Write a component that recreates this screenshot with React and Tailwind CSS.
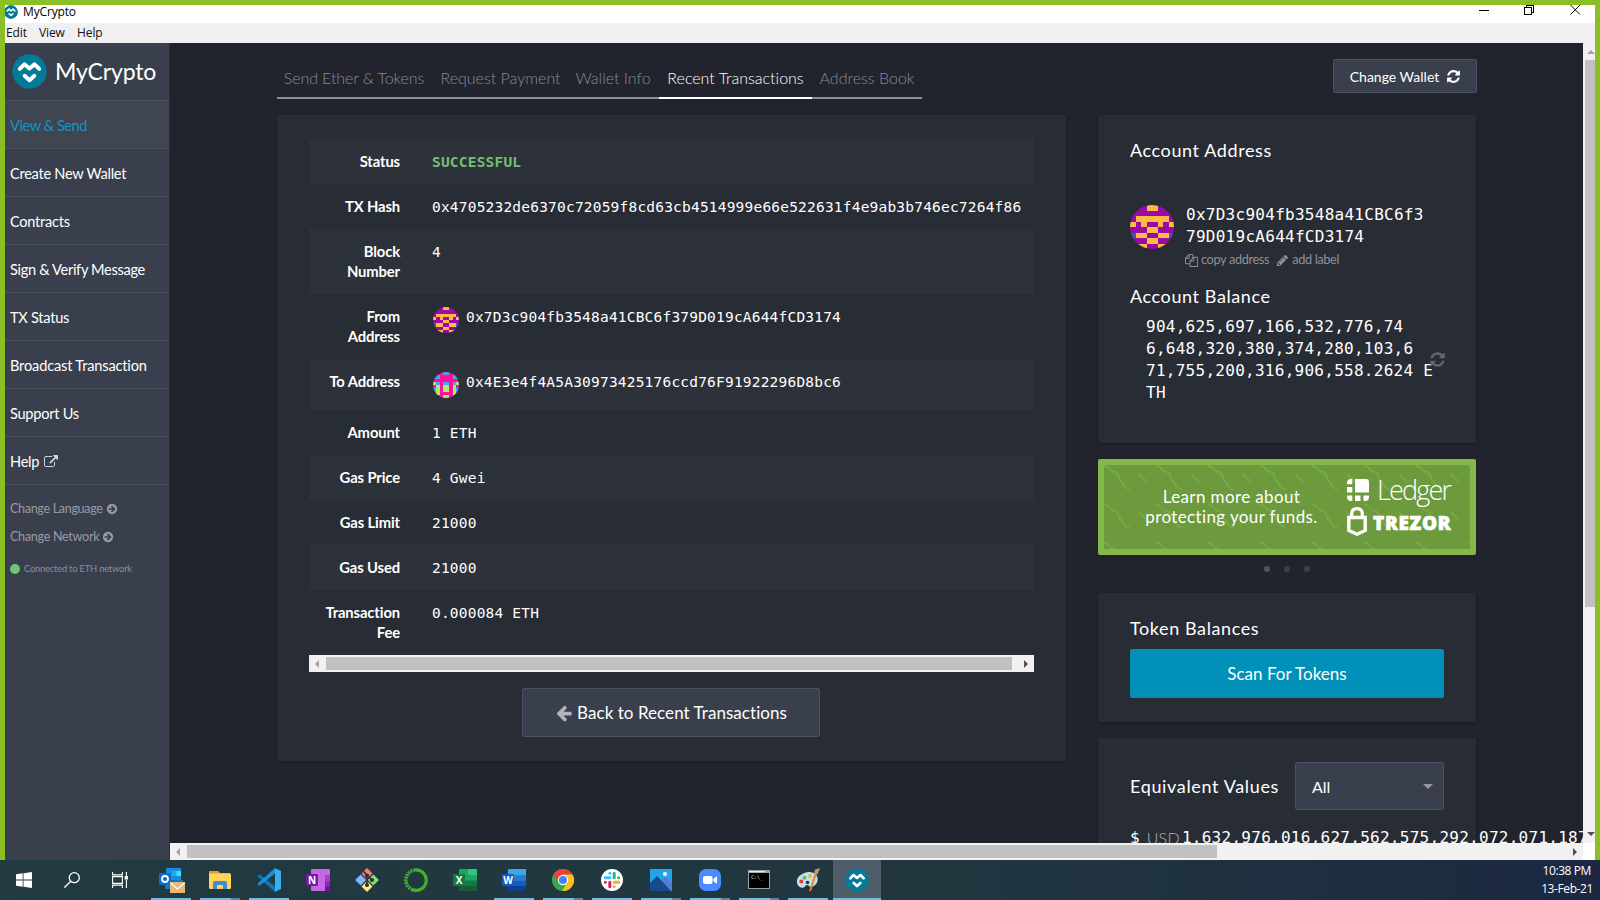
import React from "react";

const FA = {
  refresh:
    "M1639 1056q0 5-1 7-64 268-268 434.5t-478 166.5q-146 0-282.5-55t-243.5-157l-129 129q-19 19-45 19t-45-19-19-45v-448q0-26 19-45t45-19h448q26 0 45 19t19 45-19 45l-137 137q71 66 161 102t187 36q134 0 250-65t186-179q11-17 53-117 8-23 30-23h192q13 0 22.5 9.5t9.5 22.5zm25-800v448q0 26-19 45t-45 19h-448q-26 0-45-19t-19-45 19-45l138-138q-148-137-349-137-134 0-250 65t-186 179q-11 17-53 117-8 23-30 23h-199q-13 0-22.5-9.5t-9.5-22.5v-7q65-268 270-434.5t480-166.5q146 0 284 55.5t245 156.5l130-129q19-19 45-19t45 19 19 45z",
  external:
    "M1408 928v320q0 119-84.5 203.5t-203.5 84.5h-832q-119 0-203.5-84.5t-84.5-203.5v-832q0-119 84.5-203.5t203.5-84.5h704q14 0 23 9t9 23v64q0 14-9 23t-23 9h-704q-66 0-113 47t-47 113v832q0 66 47 113t113 47h832q66 0 113-47t47-113v-320q0-14 9-23t23-9h64q14 0 23 9t9 23zm384-864v512q0 26-19 45t-45 19-45-19l-176-176-652 652q-10 10-23 10t-23-10l-114-114q-10-10-10-23t10-23l652-652-176-176q-19-19-19-45t19-45 45-19h512q26 0 45 19t19 45z",
  left: "M1664 896v128q0 53-32.5 90.5t-84.5 37.5h-704l293 294q38 36 38 90t-38 90l-75 76q-37 37-90 37-52 0-91-37l-651-652q-37-37-37-90 0-52 37-91l651-650q38-38 91-38 52 0 90 38l75 74q38 38 38 91t-38 91l-293 293h704q52 0 84.5 37.5t32.5 90.5z",
  circleRight:
    "M1413 896q0-27-18-45l-91-91-362-362q-18-18-45-18t-45 18l-91 91q-18 18-18 45t18 45l189 189h-502q-26 0-45 19t-19 45v128q0 26 19 45t45 19h502l-189 189q-18 18-18 45t18 45l91 91q18 18 45 18t45-18l362-362 91-91q18-18 18-45zm251 0q0 209-103 385.5t-279.5 279.5-385.5 103-385.5-103-279.5-279.5-103-385.5 103-385.5 279.5-279.5 385.5-103 385.5 103 279.5 279.5 103 385.5z",
  pencil:
    "M491 1536l91-91-235-235-91 91v107h128v128h107zm523-928q0-22-22-22-10 0-17 7l-542 542q-7 7-7 17 0 22 22 22 10 0 17-7l542-542q7-7 7-17zm-54-192l416 416-832 832h-416v-416zm683 96q0 53-37 90l-166 166-416-416 166-165q36-38 90-38 53 0 91 38l235 234q37 39 37 91z",
  files:
    "M1696 384q40 0 68 28t28 68v1216q0 40-28 68t-68 28h-960q-40 0-68-28t-28-68v-288h-544q-40 0-68-28t-28-68v-672q0-40 20-88t48-76l408-408q28-28 76-48t88-20h416q40 0 68 28t28 68v328q68-40 128-40h416zm-544 213l-299 299h299v-299zm-640-384l-299 299h299v-299zm196 647l316-316v-416h-384v416q0 40-28 68t-68 28h-416v640h512v-256q0-40 20-88t48-76zm956 804v-1152h-384v416q0 40-28 68t-68 28h-416v640h896z",
};

const Icon = ({ name, className }) => (
  <svg viewBox="0 0 1792 1792" fill="currentColor" className={"shrink-0 " + className}>
    <path d={FA[name]} />
  </svg>
);

const Logo = ({ className }) => (
  <svg viewBox="0 0 36 36" className={"shrink-0 " + className}>
    <circle cx="18" cy="18" r="17.7" fill="#047a99" />
    <g fill="none" stroke="#fff" strokeWidth="4" strokeLinecap="round" strokeLinejoin="round">
      <path d="M8 15.4 L12.8 10.6 L18 15 L23.2 10.6 L28 15.4" />
      <path d="M13 22.4 L18 27 L23 22.4" />
    </g>
  </svg>
);

const COLORS = { P: "#9c0aa6", O: "#fdbb45", B: "#2f5fc0", K: "#ff109c", G: "#a9ef6b", L: "#559ff2" };
const FROM = ["PPPOOPPP", "PPPPPPPP", "POOOOOOP", "OPOPPOPO", "PPPOOPPP", "BOOPPOOB", "PPPOOPPP", "POOPPOOP"];
const TO = ["LKKLLKKL", "LLKKKKLL", "KKKKKKKK", "GLKLLKLG", "KGKGGKGK", "LGKGGKGL", "LGKKKKGL", "GKKGGKKG"];

const Avatar = ({ rows, className }) => (
  <svg viewBox="0 0 8 8" shapeRendering="crispEdges" className={"shrink-0 rounded-full " + className}>
    {rows.map((r, y) =>
      [...r].map((c, x) => <rect key={x + "-" + y} x={x} y={y} width="1" height="1" fill={COLORS[c]} />)
    )}
  </svg>
);

const MONO = "font-['DejaVu_Sans_Mono','Liberation_Mono',monospace]";

const NavItem = ({ children, active }) => (
  <div
    className={
      "flex h-12 items-center border-b border-[#4b5060] pt-[2px] pl-[5px] text-[14.6px] tracking-[-0.27px] " +
      (active ? "bg-[#404552] text-[#0e97c0]" : "text-white")
    }
  >
    {children}
  </div>
);

function Sidebar() {
  return (
    <div className="flex w-[165px] shrink-0 flex-col border-r border-[#2b2f39] bg-[#3a3f4d]">
      <div className="flex h-[58px] items-center border-b border-[#4b5060] pl-[7px] text-[23px] text-white">
        <Logo className="h-[35px] w-[35px]" />
        <span className="ml-[8px] tracking-[-0.15px]">MyCrypto</span>
      </div>
      <NavItem active>
        <span className="tracking-[-0.45px]">View &amp; Send</span>
      </NavItem>
      <NavItem>Create New Wallet</NavItem>
      <NavItem>Contracts</NavItem>
      <NavItem>
        <span className="tracking-[-0.33px]">Sign &amp; Verify Message</span>
      </NavItem>
      <NavItem>TX Status</NavItem>
      <NavItem>
        <span className="tracking-[-0.17px]">Broadcast Transaction</span>
      </NavItem>
      <NavItem>Support Us</NavItem>
      <NavItem>
        Help <Icon name="external" className="ml-[5px] h-[14px] w-[14px] text-[#d2d3d7]" />
      </NavItem>
      <div className="mt-[10px] flex h-7 items-center pl-[5px] text-[12.6px] tracking-[-0.34px] text-[#989ba3]">
        Change Language <Icon name="circleRight" className="ml-[3px] h-3 w-3" />
      </div>
      <div className="flex h-7 items-center pl-[5px] text-[12.6px] tracking-[-0.3px] text-[#989ba3]">
        Change Network <Icon name="circleRight" className="ml-[3px] h-3 w-3" />
      </div>
      <div className="mt-[4px] flex h-7 items-center pl-[5px] text-[9.4px] tracking-[-0.22px] text-[#8b8f98]">
        <span className="mr-1 h-[10px] w-[10px] rounded-full bg-[#70c670]" />
        Connected to ETH network
      </div>
    </div>
  );
}

const Row = ({ label, children, striped, h }) => (
  <div className={"flex " + h + " " + (striped ? "bg-[#2d3139]" : "")}>
    <div className="w-[91px] pt-3 text-right text-[14.8px] leading-5 font-bold tracking-[-0.12px] text-white">{label}</div>
    <div className={"ml-8 flex pt-[13px] text-[14.5px] leading-5 tracking-[0.2px] whitespace-nowrap text-white " + MONO}>
      {children}
    </div>
  </div>
);

const Tab = ({ w, active, children }) => (
  <div
    className={
      "flex h-[40px] items-center justify-center border-b-2 text-[16px] font-light whitespace-nowrap " +
      w +
      (active ? " border-white text-white" : " border-[#8a8c9d] text-[#888a96]")
    }
  >
    {children}
  </div>
);

const Tri = ({ d, className }) => (
  <svg viewBox="0 0 8 8" className={"h-2 w-2 shrink-0 " + className} fill="currentColor">
    <path d={d} />
  </svg>
);
const T_LEFT = "M6 0V8L2 4Z";
const T_RIGHT = "M2 0V8L6 4Z";
const T_UP = "M0 6H8L4 2Z";
const T_DOWN = "M0 2H8L4 6Z";

function TxCard() {
  return (
    <div className="h-[646px] w-[789px] rounded-[2px] bg-[#282c35] px-8 pt-6 shadow-[0_1px_3px_rgba(0,0,0,0.25)]">
      <div className="w-[725px]">
        <Row label="Status" striped h="h-[45px]">
          <span className="font-bold text-[#70c070]">SUCCESSFUL</span>
        </Row>
        <Row label="TX Hash" h="h-[45px]">0x4705232de6370c72059f8cd63cb4514999e66e522631f4e9ab3b746ec7264f86</Row>
        <Row label={<>Block<br />Number</>} striped h="h-[65px]">4</Row>
        <Row label={<>From<br />Address</>} h="h-[65px]">
          <Avatar rows={FROM} className="mr-[7px] ml-[1px] h-[26px] w-[26px]" />
          0x7D3c904fb3548a41CBC6f379D019cA644fCD3174
        </Row>
        <Row label="To Address" striped h="h-[51px]">
          <Avatar rows={TO} className="mr-[7px] ml-[1px] h-[26px] w-[26px]" />
          0x4E3e4f4A5A30973425176ccd76F91922296D8bc6
        </Row>
        <Row label="Amount" h="h-[45px]">1 ETH</Row>
        <Row label="Gas Price" striped h="h-[45px]">4 Gwei</Row>
        <Row label="Gas Limit" h="h-[45px]">21000</Row>
        <Row label="Gas Used" striped h="h-[45px]">21000</Row>
        <Row label={<>Transaction<br />Fee</>} h="h-[65px]">0.000084 ETH</Row>
        <div className="flex h-[17px] items-center justify-between bg-[#f1f1f1] px-1">
          <Tri d={T_LEFT} className="text-[#a3a3a3]" />
          <div className="mr-[10px] ml-[5px] h-[13px] flex-1 bg-[#c1c1c1]" />
          <Tri d={T_RIGHT} className="text-[#505050]" />
        </div>
      </div>
      <div className="mt-4 mr-[1px] flex justify-center">
        <div className="flex h-[49px] w-[298px] items-center justify-center rounded-[2px] border border-[#4b5062] bg-[#3a3f4d] text-[17px] text-white">
          <Icon name="left" className="mr-[4px] h-[18px] w-[18px] text-[#b3b4ba]" />
          <span className="tracking-[0.05px]">Back to Recent Transactions</span>
        </div>
      </div>
    </div>
  );
}

const CARD = "rounded-[2px] bg-[#282c35] px-8 shadow-[0_1px_3px_rgba(0,0,0,0.25)]";
const HEAD = "text-[18px] leading-[22px] tracking-[0.6px]";

function AccountCard() {
  return (
    <div className={CARD + " h-[328px] text-white"}>
      <div className={"pt-6 " + HEAD}>Account Address</div>
      <div className="mt-[43px] flex">
        <Avatar rows={FROM} className="mt-[1px] h-[44px] w-[44px]" />
        <div className="ml-3">
          <div className={"text-[16px] leading-[22px] tracking-[0.27px] " + MONO}>
            0x7D3c904fb3548a41CBC6f3
            <br />
            79D019cA644fCD3174
          </div>
          <div className="mt-1 flex h-4 items-center text-[12.8px] tracking-[-0.38px] whitespace-nowrap text-[#8e9095]">
            <Icon name="files" className="mr-[3px] -ml-[1px] h-[13px] w-[13px]" />
            copy address
            <Icon name="pencil" className="mr-[3px] ml-[7px] h-[13px] w-[13px]" />
            add label
          </div>
        </div>
      </div>
      <div className={"mt-[17px] " + HEAD}>Account Balance</div>
      <div className="mt-2 flex items-center">
        <div className={"w-[284px] pt-[1px] pl-4 text-[16px] leading-[22px] tracking-[0.27px] whitespace-nowrap " + MONO}>
          904,625,697,166,532,776,74
          <br />
          6,648,320,380,374,280,103,6
          <br />
          71,755,200,316,906,558.2624 E
          <br />
          TH
        </div>
        <Icon name="refresh" className="ml-[15px] h-[17px] w-[17px] text-[#63666e]" />
      </div>
    </div>
  );
}

function Banner() {
  return (
    <div className="relative mt-4 h-24 overflow-hidden rounded-[2px] border-[6px] border-[#84b84b] bg-[#6c9a3c]">
      <svg className="absolute inset-0 h-full w-full" viewBox="0 0 366 84">
        <defs>
          <pattern id="squiggle" width="52" height="38.5" patternUnits="userSpaceOnUse">
            <g fill="none" stroke="#79aa46" strokeWidth="1.7">
              <path d="M0 0.8 C7 0.5 4 7 11 7 C16 8 13 14 17 16 C20 18 19 24 26 24" />
              <path d="M35 9 L43 17" />
            </g>
          </pattern>
        </defs>
        <rect width="366" height="84" fill="url(#squiggle)" />
      </svg>
      <div className="relative flex h-full items-center">
        <div className="ml-[41px] w-[173px] text-center text-[17px] leading-5 tracking-[0.38px] whitespace-nowrap text-white">
          Learn more about
          <br />
          protecting your funds.
        </div>
        <div className="ml-[29px] flex flex-col text-white">
          <div className="flex h-[28px] items-center">
            <svg viewBox="0 0 22 22" className="-mt-[5px] h-[22px] w-[22px]" fill="#fff">
              <path d="M8 0H19Q22 0 22 3V13.5H8ZM0 5.3V4Q0 0 4 0H5.3V5.3ZM0 8H5.3V13.5H0ZM0 16.5H5.3V22H4Q0 22 0 18ZM8 16.5H13.5V22H8ZM16.5 16.5H22V18Q22 22 18 22H16.5Z" />
            </svg>
            <span className="-mt-[5px] ml-[8px] font-['Open_Sans',sans-serif] text-[27px] leading-7 font-light tracking-[-1.8px]">
              Ledger
            </span>
          </div>
          <div className="mt-[1px] flex h-[29px] items-center">
            <svg viewBox="0 0 20 29" className="-mt-[1px] h-[29px] w-5" fill="none" stroke="#fff">
              <path d="M4.7 10V7Q4.7 1.7 10 1.7Q15.3 1.7 15.3 7V10" strokeWidth="3.2" />
              <path d="M1.8 10.5H18.2V23.5L10 27.2L1.8 23.5Z" strokeWidth="3.4" />
            </svg>
            <span className="ml-[6px] pt-[3px] font-['Open_Sans',sans-serif] text-[19px] font-extrabold tracking-[0.7px] [-webkit-text-stroke:0.7px_white]">
              TREZOR
            </span>
          </div>
        </div>
      </div>
    </div>
  );
}

function EquivalentCard() {
  return (
    <div className={CARD + " mt-4 h-[200px] pt-6 text-white"}>
      <div className="flex items-center justify-between">
        <span className="text-[18px] tracking-[0.65px] whitespace-nowrap">Equivalent Values</span>
        <div className="flex h-12 w-[149px] items-center justify-between rounded-[2px] border border-[#4b5062] bg-[#3a3f4d] pt-[1px] pr-[10px] pl-4 text-[16px]">
          All
          <svg viewBox="0 0 10 5" className="h-[5px] w-[10px]" fill="#999">
            <path d="M0 0H10L5 5Z" />
          </svg>
        </div>
      </div>
      <div className="mt-[17px] flex items-center text-[16px] leading-[22px] whitespace-nowrap">
        <span className={MONO}>$</span>
        <span className="ml-[7px] w-[36px] font-light tracking-[0.3px] text-[#b5b6ba]">USD</span>
        <span className={"ml-[2px] tracking-[0.27px] " + MONO}>1,632,976,016,627,562,575,292,072,071,187,044</span>
      </div>
    </div>
  );
}

function Content() {
  return (
    <div className="flex min-w-0 flex-1 flex-col">
      <div className="flex h-[800px]">
        <div className="h-full w-[1413px] overflow-hidden bg-[#21242d] pl-[107px]">
          <div className="flex h-[72px] w-[1200px] justify-between">
            <div className="flex pt-4">
              <Tab w="w-[156px]">
                <span className="mr-[2px] tracking-[-0.1px]">Send Ether &amp; Tokens</span>
              </Tab>
              <Tab w="w-[134px]">
                <span className="ml-[1px]">Request Payment</span>
              </Tab>
              <Tab w="w-[92px]">Wallet Info</Tab>
              <Tab w="w-[153px]" active>Recent Transactions</Tab>
              <Tab w="w-[110px]">Address Book</Tab>
            </div>
            <div className="mt-4 flex h-[34px] w-[144px] items-center justify-center rounded-[2px] border border-[#4b5062] bg-[#3a3f4d] pt-[1px] text-[14px] text-white">
              <span className="ml-[1px]">Change Wallet</span>
              <Icon name="refresh" className="ml-[7px] h-[15px] w-[15px]" />
            </div>
          </div>
          <div className="flex gap-8">
            <TxCard />
            <div className="w-[378px] shrink-0">
              <AccountCard />
              <Banner />
              <div className="flex h-[38px] justify-center gap-[14px] pt-[11px]">
                <span className="h-[6px] w-[6px] rounded-full bg-[#4c5367]" />
                <span className="h-[6px] w-[6px] rounded-full bg-[#3b3f4d]" />
                <span className="h-[6px] w-[6px] rounded-full bg-[#3b3f4d]" />
              </div>
              <div className={CARD + " h-[129px] text-white"}>
                <div className={"pt-6 " + HEAD}>Token Balances</div>
                <div className="mt-[10px] flex h-[49px] items-center justify-center rounded-[2px] bg-[#0090b8] text-[17px]">Scan For Tokens</div>
              </div>
              <EquivalentCard />
            </div>
          </div>
        </div>
        <div className="flex w-3 flex-col items-end bg-[#f1f1f1]">
          <Tri d={T_UP} className="mt-[5px] text-[#a3a3a3]" />
          <div className="mt-1 h-[547px] w-[10px] bg-[#c1c1c1]" />
          <Tri d={T_DOWN} className="mt-auto mb-[5px] text-[#505050]" />
        </div>
      </div>
      <div className="flex h-[17px]">
        <div className="flex w-[1413px] items-center bg-[#f1f1f1]">
          <Tri d={T_LEFT} className="ml-1 text-[#a3a3a3]" />
          <div className="ml-[5px] h-[13px] w-[1030px] bg-[#c1c1c1]" />
          <Tri d={T_RIGHT} className="mr-1 ml-auto text-[#505050]" />
        </div>
        <div className="w-3 bg-white" />
      </div>
    </div>
  );
}

const Office = ({ letter, colors, tile }) => (
  <svg viewBox="0 0 24 24" className="h-6 w-6">
    <rect x="6" y="1" width="18" height="22" rx="1" fill={colors[0]} />
    <rect x="15" y="1" width="9" height="6" fill={colors[1]} />
    <rect x="6" y="7" width="18" height="5.5" fill={colors[2]} />
    <rect x="6" y="12.5" width="18" height="5.5" fill={colors[3]} />
    <rect x="6" y="18" width="18" height="5" fill={colors[4]} />
    <rect x="0" y="6" width="12" height="12" rx="1" fill={tile} />
    <text x="6" y="15.6" textAnchor="middle" fontSize="10" fontWeight="700" fontFamily="Open Sans" fill="#fff">
      {letter}
    </text>
  </svg>
);

const TASKS = [
  {
    bar: 1,
    icon: (
      <svg viewBox="0 0 26 26" className="mt-[2px] ml-[2px] h-[26px] w-[26px]">
        <rect x="7" y="0" width="15" height="14" fill="#1490df" />
        <rect x="13" y="3" width="4.5" height="5" fill="#28a8ea" />
        <rect x="17.5" y="3" width="4.5" height="5" fill="#50d9ff" />
        <rect x="6" y="12" width="18" height="9" fill="#0f78c8" />
        <rect x="0" y="5" width="12" height="12" rx="1" fill="#0a6fc9" />
        <circle cx="6" cy="11" r="3" fill="none" stroke="#fff" strokeWidth="1.8" />
        <rect x="11" y="14" width="15" height="11" fill="#e8b877" />
        <path d="M11.5 15 L18.5 21 L25.5 15" fill="none" stroke="#fff" strokeWidth="1.3" />
      </svg>
    ),
  },
  {
    bar: 2,
    icon: (
      <svg viewBox="0 0 24 24" className="h-6 w-6">
        <path d="M1 3H10L12 5H22V8H1Z" fill="#e3a21a" />
        <rect x="1" y="5.5" width="22" height="15.5" rx="1" fill="#ffd35c" />
        <path d="M5 21V15Q5 13 7 13H17Q19 13 19 15V21H15V17H9V21Z" fill="#3f8ed2" />
      </svg>
    ),
  },
  {
    bar: 1,
    icon: (
      <svg viewBox="0 0 24 24" className="h-6 w-6">
        <path d="M2.6 6.2L18 18.6V24L0.4 8.2Z" fill="#0b77c2" />
        <path d="M2.6 17.8L18 5.4V0L0.4 15.8Z" fill="#1b8fda" />
        <path d="M17.6 0L24 3V21L17.6 24L18 22V2Z" fill="#37adf2" />
      </svg>
    ),
  },
  {
    icon: (
      <svg viewBox="0 0 24 24" className="h-6 w-6">
        <rect x="5" y="1" width="19" height="22" rx="1" fill="#c867e6" />
        <rect x="19" y="7" width="5" height="5.5" fill="#a93bd0" />
        <rect x="19" y="12.5" width="5" height="5.5" fill="#8a2bb8" />
        <rect x="19" y="18" width="5" height="5" fill="#6c189c" />
        <rect x="0" y="6" width="12" height="12" rx="1" fill="#7719aa" />
        <text x="6" y="15.6" textAnchor="middle" fontSize="10" fontWeight="700" fontFamily="Open Sans" fill="#fff">N</text>
      </svg>
    ),
  },
  {
    icon: (
      <svg viewBox="0 0 24 24" className="h-6 w-6">
        <path d="M12 0L17.5 5.5L12 11L6.5 5.5Z" fill="#f08080" />
        <path d="M5.7 6.5L11.2 12L5.7 17.5L0 12Z" fill="#80b3ff" />
        <path d="M18.3 6.5L24 12L18.3 17.5L12.8 12Z" fill="#8fdb70" />
        <path d="M12 13L17.5 18.5L12 24L6.5 18.5Z" fill="#ffe680" />
        <g stroke="#33302c" strokeWidth="1.7" fill="#33302c">
          <path d="M8.5 3.5L17 12M12 7V17" fill="none" />
          <circle cx="12" cy="7.5" r="1.2" />
          <circle cx="17" cy="12" r="1.2" />
          <circle cx="12" cy="17" r="1.2" />
        </g>
      </svg>
    ),
  },
  {
    icon: (
      <svg viewBox="0 0 24 24" className="h-6 w-6" fill="none" stroke="#43b02a">
        <path d="M11 2A10.2 10.2 0 1 1 7 21" strokeWidth="3.2" />
        <path d="M11 2A10.2 10.2 0 0 0 7 21" strokeWidth="3.6" strokeDasharray="2 0.8" />
      </svg>
    ),
  },
  { icon: <Office letter="X" tile="#107c41" colors={["#21a366", "#33c481", "#21a366", "#107c41", "#185c37"]} /> },
  { bar: 1, icon: <Office letter="W" tile="#185abd" colors={["#41a5ee", "#41a5ee", "#2b7cd3", "#185abd", "#103f91"]} /> },
  {
    bar: 2,
    icon: (
      <svg viewBox="0 0 24 24" className="h-6 w-6">
        <circle cx="12" cy="12" r="11" fill="#34a853" />
        <path d="M2.5 6.5A11 11 0 0 1 21.5 6.5L12 7L7.7 14.5Z" fill="#ea4335" />
        <path d="M21.5 6.5A11 11 0 0 1 11 23L16.3 14.5L12 6.5Z" fill="#fbc116" />
        <circle cx="12" cy="12" r="5.2" fill="#fff" />
        <circle cx="12" cy="12" r="4.1" fill="#4285f4" />
      </svg>
    ),
  },
  {
    bar: 1,
    icon: (
      <svg viewBox="0 0 24 24" className="h-6 w-6">
        <circle cx="12" cy="12" r="11" fill="#fff" />
        <g strokeWidth="3" strokeLinecap="round" fill="none">
          <path d="M9.8 5.3H9.9M5.3 9.8H9.8" stroke="#36c5f0" />
          <path d="M14.2 5.3V9.8M18.7 9.8H18.6" stroke="#2eb67d" />
          <path d="M14.2 14.2H18.7M14.2 18.7H14.3" stroke="#ecb22e" />
          <path d="M9.8 14.2V18.7M5.3 14.2H5.4" stroke="#e01e5a" />
        </g>
      </svg>
    ),
  },
  {
    bar: 2,
    icon: (
      <svg viewBox="0 0 24 24" className="h-6 w-6">
        <rect x="1" y="1" width="22" height="22" fill="#22a5ec" />
        <path d="M12 13L16.5 9L23 15V23H14Z" fill="#5a78d8" />
        <path d="M1 15L8 8L22 23H1Z" fill="#174a8c" />
        <circle cx="16" cy="6" r="2" fill="#fff" />
      </svg>
    ),
  },
  {
    bar: 2,
    icon: (
      <svg viewBox="0 0 24 24" className="h-6 w-6">
        <rect x="1" y="1" width="22" height="22" rx="7" fill="#4a8cff" />
        <rect x="5" y="8" width="9.5" height="8" rx="2" fill="#fff" />
        <path d="M15.3 11L19 8.3V15.7L15.3 13Z" fill="#fff" />
      </svg>
    ),
  },
  {
    bar: 2,
    icon: (
      <svg viewBox="0 0 24 24" className="h-6 w-6">
        <rect x="1" y="2" width="22" height="19" fill="#9aa0a3" />
        <rect x="2" y="5" width="20" height="15" fill="#000" />
        <rect x="2" y="3" width="16" height="1.2" fill="#e8e8e8" />
        <text x="4" y="11" fontSize="5" fontFamily="DejaVu Sans Mono" fill="#ddd">C:\_</text>
      </svg>
    ),
  },
  {
    bar: 1,
    icon: (
      <svg viewBox="0 0 24 24" className="h-6 w-6">
        <path d="M10 4.5C17 2.5 23 7 21.5 13C20 18.5 14.5 20 13 18C11.5 16 9.5 17 8.5 19C7 21 0 19 1 12.5C1.7 8.5 5 6 10 4.5Z" fill="#bfe0f3" />
        <circle cx="5.3" cy="13.5" r="2" fill="#e23b30" />
        <circle cx="8.5" cy="9.7" r="2" fill="#6cc04a" />
        <circle cx="14" cy="8" r="2" fill="#f3b61f" />
        <circle cx="11.5" cy="14.5" r="1.8" fill="#223a42" />
        <path d="M13 23.5L18.5 6L20.5 7L15 23Z" fill="#e58a2e" />
        <path d="M18 6L19 1.5L24 0L21.5 6.5Z" fill="#c9986a" />
      </svg>
    ),
  },
  { bar: 1, active: true, icon: <Logo className="h-6 w-6" /> },
];

function Taskbar() {
  return (
    <div className="flex h-10 w-full bg-[linear-gradient(90deg,#223a42_0%,#21363f_60%,#1f3040_80%,#1c2843_100%)] text-white">
      <div className="flex w-12 items-center justify-center">
        <svg viewBox="0 0 16 16" className="h-4 w-4" fill="#fff">
          <path d="M0 2.3L6.7 1.3V7.5H0ZM7.5 1.2L16 0V7.5H7.5ZM0 8.4H6.7V14.7L0 13.7ZM7.5 8.4H16V16L7.5 14.8Z" />
        </svg>
      </div>
      <div className="flex w-12 items-center justify-center">
        <svg viewBox="0 0 16 16" className="h-4 w-4" fill="none" stroke="#fff" strokeWidth="1.3">
          <circle cx="10.3" cy="5.7" r="5" />
          <path d="M6.7 9.3L0.4 15.6" />
        </svg>
      </div>
      <div className="flex w-[51px] items-center justify-center px-3">
        <svg viewBox="0 0 16 16" className="-ml-1 h-4 w-4" fill="none" stroke="#fff" strokeWidth="1.1">
          <path d="M0.6 0V2.9H10.4V0M0.6 16V13.1H10.4V16M0.6 4.6H10.4V11.4H0.6ZM14.4 0V4M14.4 8V16" />
          <rect x="13.2" y="4.6" width="2.4" height="2.4" fill="#fff" />
        </svg>
      </div>
      {TASKS.map((t, i) => (
        <div
          key={i}
          className={
            "relative flex h-10 shrink-0 items-center justify-center " + (t.active ? "w-12 bg-[#4e5d68]" : "w-[49px] pr-[2px]")
          }
        >
          {t.icon}
          {t.bar && (
            <div className={"absolute bottom-0 flex h-[2px] " + (t.active ? "inset-x-0" : "left-1 w-10")}>
              <div className="flex-1 bg-[#76b9ed]" />
              {t.bar === 2 && <div className="w-[9px] bg-[#5587ab]" />}
            </div>
          )}
        </div>
      ))}
      <div className="ml-auto flex flex-col items-end pt-[2px] pr-[7px] font-['Open_Sans',sans-serif] text-[12px] leading-[18px] tracking-[-0.4px]">
        <span className="pr-[2px]">10:38 PM</span>
        <span>13-Feb-21</span>
      </div>
    </div>
  );
}

export default function App() {
  return (
    <div className="flex h-[900px] w-[1600px] flex-col overflow-hidden font-['Lato',sans-serif] [font-variant-ligatures:none]">
      <div className="flex h-[860px] flex-col border-x-[5px] border-t-[5px] border-[#8bbf26]">
        <div className="flex h-[18px] items-center justify-between overflow-hidden bg-white font-['Open_Sans',sans-serif] text-[12px] text-black">
          <div className="flex items-center pb-[4px]">
            <Logo className="-ml-[1px] h-[14px] w-[14px]" />
            <span className="ml-[5px] leading-[14px] tracking-[-0.15px]">MyCrypto</span>
          </div>
          <svg viewBox="0 0 102 12" className="mr-[14px] mb-[8px] h-3 w-[102px]" fill="none" stroke="#000" strokeWidth="1" shapeRendering="crispEdges">
            <path d="M0 6.5H10M45.5 3.5H52.5V10.5H45.5ZM47.5 3V1.5H54.5V8.5H53" />
            <path d="M91.5 1L101 10.5M101 1L91.5 10.5" shapeRendering="auto" />
          </svg>
        </div>
        <div className="flex h-5 items-center bg-[#f0f0f0] pl-[1px] font-['Open_Sans',sans-serif] text-[12px] tracking-[-0.1px] text-[#111]">
          <span className="w-[33px]">Edit</span>
          <span className="w-[38px]">View</span>
          <span>Help</span>
        </div>
        <div className="flex h-[817px]">
          <Sidebar />
          <Content />
        </div>
      </div>
      <Taskbar />
    </div>
  );
}
